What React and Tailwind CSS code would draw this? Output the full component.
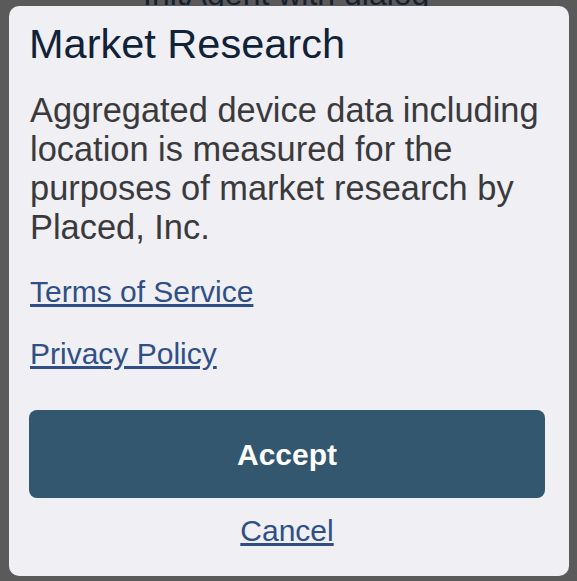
export default function App() {
  return (
    <div
      className="relative h-[581px] w-[577px] overflow-hidden bg-[#5a5a5a] pt-[6px] pl-[9px]"
      style={{ fontFamily: '"Liberation Sans", Arial, sans-serif' }}
    >
      <div className="absolute left-[143px] top-[-22px] whitespace-nowrap text-[32px] leading-[32px] text-[#17212e]">
        InitAgent with dialog
      </div>
      <div className="relative flex w-[560px] flex-col rounded-[10px] bg-[#efeff4] pl-[20px] pr-[24px] pt-[17px] pb-[30px]">
        <h1 className="text-[41.5px] leading-[41px] text-[#0f2238]">
          Market Research
        </h1>
        <p className="mt-[27px] ml-[1px] text-[34.4px] leading-[39px] text-[#3a3a3d]">
          Aggregated device data including location is measured for the purposes of market research by Placed, Inc.
        </p>
        <a href="#" className="mt-[30px] ml-[1px] self-start text-[30px] leading-[30px] text-[#2f4f86] underline">
          Terms of Service
        </a>
        <a href="#" className="mt-[32px] ml-[1px] self-start text-[30px] leading-[30px] text-[#2f4f86] underline">
          Privacy Policy
        </a>
        <button className="mt-[41px] flex h-[88px] w-full items-center justify-center rounded-[8px] bg-[#32576f] pt-[2px] text-[30px] font-bold leading-[30px] text-white">
          Accept
        </button>
        <a href="#" className="mt-[18px] self-center text-[30px] leading-[30px] text-[#2f4f86] underline">
          Cancel
        </a>
      </div>
    </div>
  );
}
